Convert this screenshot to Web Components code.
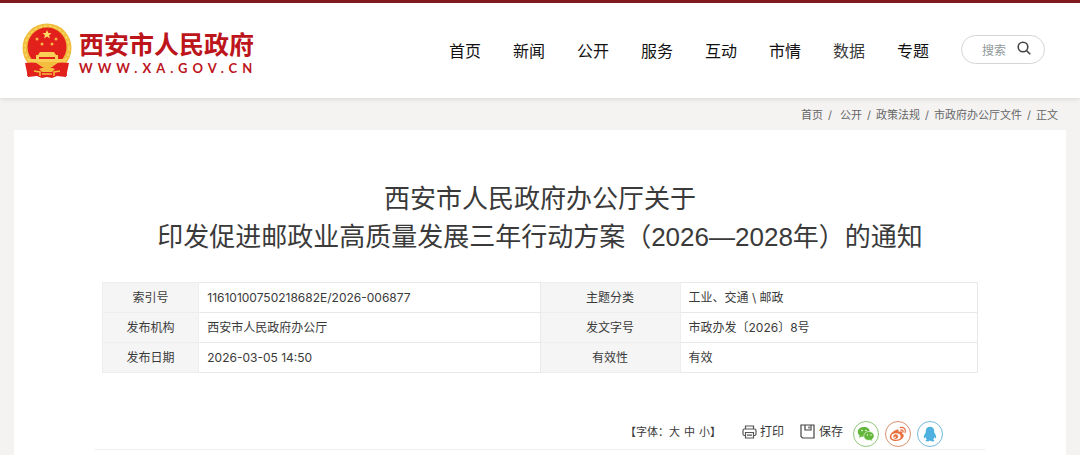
<!DOCTYPE html>
<html lang="zh-CN">
<head>
<meta charset="utf-8">
<meta name="viewport" content="width=device-width, initial-scale=1">
<title>西安市人民政府</title>
<style>
body{margin:0;background:#f4f3f2;color:#3a3a3a;font:12px/18px Inter,"Noto Sans CJK SC",sans-serif}
</style>
</head>
<body>
<gov-page></gov-page>
<script>
const define = (name, html, setup) => customElements.define(name, class extends HTMLElement {
  constructor() {
    super();
    this.attachShadow({mode: 'open'}).innerHTML = html;
    if (setup) setup(this);
  }
});

define('gov-emblem', `
<style>:host{display:block;width:50px;height:55px}svg{display:block;width:100%;height:100%}</style>
<svg viewBox="0 0 50 55" aria-hidden="true">
  <path d="M7 38 5 53l8-2 5 3 7-2 7 2 5-3 8 2-2-15z" fill="#d8211c"/>
  <circle cx="25" cy="25" r="24.5" fill="#f0bd3c"/>
  <circle cx="25" cy="25" r="22" fill="none" stroke="#f8d968" stroke-width="1.5" stroke-dasharray="3 2"/>
  <circle cx="25" cy="24" r="19.5" fill="#e2211d"/>
  <path d="m25 7 1.300 3 3.200.2-2.500 2 .9 3.200-2.900-1.800-2.900 1.800.9-3.200-2.500-2 3.200-.2z" fill="#ffe066"/>
  <g fill="#f6b544"><circle cx="15" cy="16" r="1.500"/><circle cx="34" cy="16" r="1.500"/><circle cx="20" cy="21" r="1.500"/><circle cx="30" cy="21" r="1.500"/></g>
  <path d="M18 29h14l2 3H16zM14 32h22v4h7l1 4H6l1-4h7z" fill="#f9cf55"/>
  <path d="M17 34h16v2H17z" fill="#e2211d"/>
  <path d="M3 40q13-2 17 3l5-2 5 2q4-5 17-3l-3 14-9-1-5 2-5-1-5 1-5-2-9 1z" fill="#e2211d"/>
  <path d="M13 39h24l-7 5H20zM17 46l8-3 8 3-3 3H20z" fill="#f5bd3f"/>
  <path d="m12 48 6 1v4m20-5-6 1v4M20 51h10" fill="none" stroke="#f5bd3f" stroke-width="1.500"/>
</svg>`);

define('gov-logo', `
<style>
:host{display:block}
a{display:flex;align-items:center;gap:7px;color:#bd151c;text-decoration:none}
.name{display:block;font:700 25px/34px "Noto Sans CJK SC",sans-serif}
.url{display:block;font:700 13px/16px Lato,sans-serif;letter-spacing:5px}
</style>
<a href="#"><gov-emblem></gov-emblem><span><span class="name">西安市人民政府</span><span class="url">WWW.XA.GOV.CN</span></span></a>`);

define('gov-nav', `
<style>
:host{display:block}
nav{display:flex;gap:32px}
a{color:#111;text-decoration:none;font-size:16px;line-height:24px}
a:nth-child(7){color:#3a3a3a}
</style>
<nav aria-label="主导航"></nav>`, el => {
  el.shadowRoot.querySelector('nav').innerHTML =
    ['首页','新闻','公开','服务','互动','市情','数据','专题'].map(t => `<a href="#">${t}</a>`).join('');
});

define('gov-search', `
<style>
:host{display:block;padding-bottom:2px}
form{display:flex;align-items:center;box-sizing:border-box;width:84px;height:29px;padding:0 13px 0 20px;border:1px solid #d5d5d5;border-radius:15px;background:#fff}
input{min-width:0;flex:1;padding:0;border:0;background:none;outline:0;font:12px/18px "Noto Sans CJK SC",sans-serif;color:#333}
input::placeholder{color:#8f9999;opacity:1}
button{display:block;padding:0 0 4px;border:0;background:none}
svg{display:block}
</style>
<form><input type="text" placeholder="搜索" aria-label="搜索"><button type="button" aria-label="搜索"><svg width="14" height="14" viewBox="0 0 14 14" fill="none" stroke="#444" stroke-width="1.600"><circle cx="6" cy="6" r="4.800"/><path d="m9.500 9.500 3.700 3.700"/></svg></button></form>`);

define('gov-header', `
<style>
:host{display:block;border-top:3px solid #801a20;background:#fff;box-shadow:0 1px 5px #0000001f}
header{display:flex;align-items:center;height:95px;padding:0 35px 0 22px}
gov-nav{margin-left:auto}
gov-search{margin-left:32px}
</style>
<header><gov-logo></gov-logo><gov-nav></gov-nav><gov-search></gov-search></header>`);

define('gov-breadcrumb', `
<style>
:host{display:block}
nav{display:flex;justify-content:flex-end;gap:5px;padding:8px 22px 6px;font-size:11px;line-height:18px;color:#666}
a{color:inherit;text-decoration:none}
</style>
<nav aria-label="当前位置"><a href="#">首页</a><span>/</span><a href="#">&nbsp;公开</a><span>/</span><a href="#">政策法规</a><span>/</span><a href="#">市政府办公厅文件</a><span>/</span><span>正文</span></nav>`);

define('doc-meta', `
<style>
:host{display:block}
table{width:100%;border-collapse:collapse;table-layout:fixed}
th,td{box-sizing:border-box;height:30px;padding:0 8px;border:1px solid #e8e8e8;font-size:12px;line-height:18px;font-weight:400}
th{border-color:#eee;background:#f5f5f5;text-align:center}
td{text-align:left}
.a{width:11%}.b{width:39%}.c{width:16%}
</style>
<table><colgroup><col class="a"><col class="b"><col class="c"><col></colgroup><tbody>
<tr><th scope="row">索引号</th><td>11610100750218682E/2026-006877</td><th scope="row">主题分类</th><td>工业、交通 \\ 邮政</td></tr>
<tr><th scope="row">发布机构</th><td>西安市人民政府办公厅</td><th scope="row">发文字号</th><td>市政办发〔2026〕8号</td></tr>
<tr><th scope="row">发布日期</th><td>2026-03-05 14:50</td><th scope="row">有效性</th><td>有效</td></tr>
</tbody></table>`);

define('share-link', `
<style>
:host{display:block}
a{display:grid;place-items:center;box-sizing:border-box;width:26px;height:26px;border:1px solid var(--ring);border-radius:50%;color:var(--ink)}
</style>
<a href="#"><slot></slot></a>`, el => {
  el.shadowRoot.querySelector('a').setAttribute('aria-label', el.getAttribute('label') || '');
});

define('doc-tools', `
<style>
:host{display:flex;justify-content:flex-end;align-items:center;border-bottom:1px solid #eee;padding:0 42px 2px 0;font-size:12px;line-height:18px}
button{display:flex;align-items:center;padding:0;border:0;background:none;color:inherit;font:inherit}
svg{display:block}
.size{display:flex;font-size:11px}
.size button+button{margin-left:4px}
.print{gap:3px;margin-left:21px}
.save{gap:4px;margin-left:16px}
.share{display:flex;gap:6px;margin-left:10px;padding-top:5px}
</style>
<div class="size"><span>【字体：</span><button>大</button><button>中</button><button>小</button><span>】</span></div>
<button class="print"><svg width="15" height="14" viewBox="0 0 15 14" fill="none" stroke="#555" stroke-width="1.200"><path d="M3.500 4V1h8v3M3 10.500H2.500Q1 10.500 1 9V5.500Q1 4 2.500 4h10Q14 4 14 5.500V9q0 1.500-1.500 1.500H12M3.500 7.500h8V13h-8zM5 10.200h5"/></svg>打印</button>
<button class="save"><svg width="15" height="15" viewBox="0 0 15 15" fill="none" stroke="#444" stroke-width="1.200"><path d="M1 1h13v13H2.500L1 12.500zM5 1v5h6V1M9 2.500v2"/></svg>保存</button>
<div class="share">
<share-link label="微信" style="--ring:#8fc77d;--ink:#62b73b"><svg width="18" height="16" viewBox="0 0 18 16" fill="currentColor"><path d="M7 1C3 1 .8 3.300.8 6c0 1.500.8 2.800 2 3.700L2 12l2.700-1.400c3.800 1 8-1 8-4.800C12.700 3 10.500 1 7 1z"/><path d="M12 5.500c-3 0-5.200 2-5.200 4.500 0 3 3 4.800 6.400 4.200l2.200 1.100-.5-1.900c1.400-.9 2.200-2 2.200-3.400 0-2.500-2.200-4.500-5.100-4.500z" stroke="#fff" stroke-width=".6"/><g fill="#fff"><circle cx="5" cy="4.500" r=".8"/><circle cx="9" cy="4.500" r=".8"/><circle cx="10.500" cy="9" r=".7"/><circle cx="14" cy="9" r=".7"/></g></svg></share-link>
<share-link label="微博" style="--ring:#d9906f;--ink:#e8703f"><svg width="18" height="16" viewBox="0 0 18 16"><path d="M7 4C9 3 10 4 9.600 5.700c3-1.200 4.300-.2 3.500 1.700 4.400 2-.5 7.600-6.300 7.600C3 15 .8 13.200.8 11 .8 8 4.500 4.500 7 4z" fill="currentColor"/><ellipse cx="7" cy="10.500" rx="4.600" ry="3.200" fill="#fff"/><circle cx="6.700" cy="10.600" r="2.400" fill="currentColor"/><circle cx="6" cy="11.200" r=".8" fill="#fff"/><path d="M11.500 1.500c3.500-.8 5.800 2 4.600 5M12 4c1.500-.3 2.500.8 2 2" fill="none" stroke="currentColor" stroke-width="1.300" stroke-linecap="round"/></svg></share-link>
<share-link label="QQ" style="--ring:#72b9dc;--ink:#4eb1e0"><svg width="14" height="16" viewBox="0 0 14 16" fill="currentColor"><path d="M7 .8C4.300.8 2.800 2.800 2.800 5v1.500C1.300 8.500.4 10.500.9 12c.3.6 1-.1 1.500-1 .2 1 .7 1.800 1.300 2.400-1.600.8-1.200 2 .6 2 1 0 2-.2 2.700-.8.700.6 1.700.8 2.700.8 1.800 0 2.200-1.200.6-2 .6-.6 1.100-1.400 1.300-2.400.5.9 1.200 1.600 1.500 1 .5-1.500-.4-3.500-1.900-5.500V5C11.200 2.800 9.700.8 7 .8z"/></svg></share-link>
</div>`);

define('gov-article', `
<style>
:host{display:block;margin:0 14px;background:#fff}
article{padding:50px 81px 5px}
h1{margin:0 0 26px;text-align:center;color:#3a3a3a;font:400 26px/38px "Liberation Sans","Noto Sans CJK SC",sans-serif}
doc-meta{margin:0 7px 43px}
</style>
<article><h1>西安市人民政府办公厅关于<br>印发促进邮政业高质量发展三年行动方案（2026—2028年）的通知</h1><doc-meta></doc-meta><doc-tools></doc-tools></article>`);

define('gov-page', `
<style>:host{display:block}gov-header{position:relative}</style>
<gov-header></gov-header><main><gov-breadcrumb></gov-breadcrumb><gov-article></gov-article></main>`);
</script>
</body>
</html>
